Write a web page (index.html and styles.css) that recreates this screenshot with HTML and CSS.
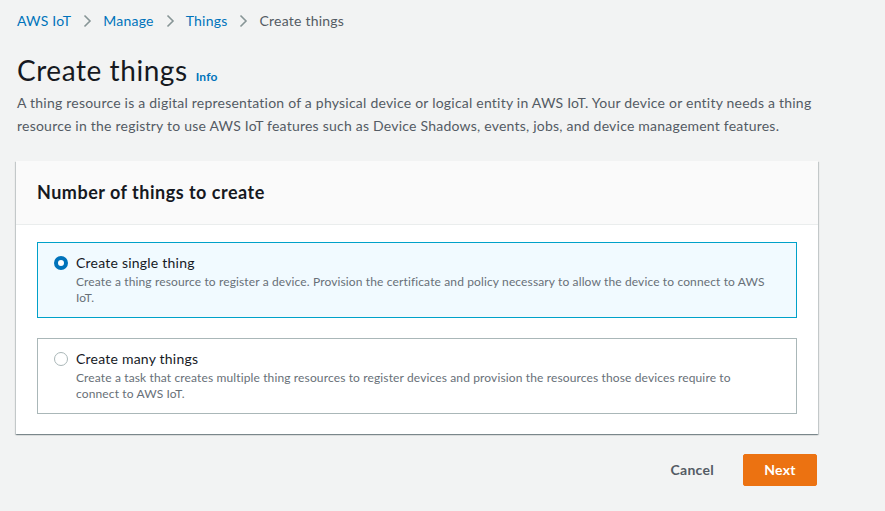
FILE: index.html
```html
<!DOCTYPE html>
<html lang="en">
<head>
<meta charset="utf-8">
<title>Create things</title>
<link rel="stylesheet" href="styles.css">
</head>
<body>
<div class="page">
  <nav class="crumbs">
    <a href="#">AWS IoT</a>
    <svg class="chev" width="16" height="16" viewBox="0 0 16 16"><path d="M5.5 2.5 11 8l-5.5 5.5" fill="none" stroke="currentColor" stroke-width="1.6"/></svg>
    <a href="#">Manage</a>
    <svg class="chev" width="16" height="16" viewBox="0 0 16 16"><path d="M5.5 2.5 11 8l-5.5 5.5" fill="none" stroke="currentColor" stroke-width="1.6"/></svg>
    <a href="#">Things</a>
    <svg class="chev" width="16" height="16" viewBox="0 0 16 16"><path d="M5.5 2.5 11 8l-5.5 5.5" fill="none" stroke="currentColor" stroke-width="1.6"/></svg>
    <span class="current">Create things</span>
  </nav>
  <header class="head">
    <h1>Create things</h1>
    <a class="info" href="#">Info</a>
  </header>
  <p class="desc">A thing resource is a digital representation of a physical device or logical entity in AWS IoT. Your device or entity needs a thing resource in the registry to use AWS IoT features such as Device Shadows, events, jobs, and device management features.</p>

  <section class="card">
    <div class="card-head"><h2>Number of things to create</h2></div>
    <div class="card-body">
      <label class="opt selected">
        <span class="radio on"></span>
        <span class="opt-text">
          <span class="opt-title">Create single thing</span>
          <span class="opt-desc">Create a thing resource to register a device. Provision the certificate and policy necessary to allow the device to connect to AWS IoT.</span>
        </span>
      </label>
      <label class="opt">
        <span class="radio"></span>
        <span class="opt-text">
          <span class="opt-title">Create many things</span>
          <span class="opt-desc">Create a task that creates multiple thing resources to register devices and provision the resources those devices require to connect to AWS IoT.</span>
        </span>
      </label>
    </div>
  </section>

  <div class="actions">
    <button class="btn-link">Cancel</button>
    <button class="btn-primary">Next</button>
  </div>
</div>
</body>
</html>
```

FILE: styles.css
```css
* { box-sizing: border-box; }
html, body { margin: 0; padding: 0; }
body {
  background: #f2f3f3;
  font-family: Lato, "Open Sans", sans-serif;
  color: #16191f;
  font-size: 14px;
  line-height: 22px;
  letter-spacing: 0.016em;
}
.page {
  width: 802px;
  margin-left: 16px;
  padding-top: 10px;
}
.crumbs {
  display: flex;
  align-items: center;
  padding-left: 1px;
  height: 22px;
  font-size: 14px;
}
.crumbs a { color: #0073bb; text-decoration: none; }
.crumbs .chev { color: #879596; margin: 0 8px 0 8px; }
.crumbs .current { color: #545b64; }
.head {
  display: flex;
  align-items: baseline;
  margin-top: 20px;
  padding-left: 1px;
}
.head h1 {
  margin: 0;
  font-size: 28px;
  line-height: 36px;
  font-weight: 400;
  letter-spacing: 0.02em;
  color: #16191f;
}
.info {
  margin-left: 8px;
  font-size: 12px;
  font-weight: 700;
  color: #0073bb;
  text-decoration: none;
}
.desc {
  margin: 3px 0 0 1px;
  color: #545b64;
  font-size: 14px;
  line-height: 23px;
  width: 815px;
}
.card {
  margin-top: 24px;
  background: #fff;
  box-shadow: 0 1px 1px 0 rgba(0,28,36,.3), 1px 1px 1px 0 rgba(0,28,36,.15), -1px 1px 1px 0 rgba(0,28,36,.15);
}
.card-head {
  background: #fafafa;
  border-bottom: 1px solid #eaeded;
  padding: 19px 21px 20px;
}
.card-head h2 {
  margin: 0;
  font-size: 18px;
  line-height: 24px;
  font-weight: 700;
  letter-spacing: 0.5px;
  color: #16191f;
}
.card-body {
  padding: 17px 21px 20px;
  display: flex;
  flex-direction: column;
  gap: 20px;
}
.opt {
  display: flex;
  align-items: flex-start;
  border: 1px solid #aab7b8;
  padding: 9px 24px 11px 16px;
  min-height: 76px;
}
.opt.selected {
  border-color: #00a1c9;
  background: #f1faff;
}
.radio {
  flex: none;
  width: 14px;
  height: 14px;
  border-radius: 50%;
  border: 1px solid #aab7b8;
  background: #fff;
  margin-top: 4px;
  margin-right: 8px;
}
.radio.on {
  border: 4px solid #0073bb;
}
.opt-text { display: flex; flex-direction: column; }
.opt-title { font-size: 14px; line-height: 22px; color: #16191f; }
.opt-desc { font-size: 12px; line-height: 16px; color: #687078; letter-spacing: 0.011em; }
.actions {
  display: flex;
  justify-content: flex-end;
  align-items: center;
  margin-top: 20px;
  padding-right: 1px;
}
.btn-link, .btn-primary {
  font-family: inherit;
  font-size: 14px;
  font-weight: 700;
  line-height: 22px;
  letter-spacing: 0.02em;
  border: 1px solid transparent;
  border-radius: 2px;
  cursor: pointer;
}
.btn-link {
  background: transparent;
  color: #545b64;
  padding: 4px 20px;
  margin-right: 8px;
}
.btn-primary {
  background: #ec7211;
  color: #fff;
  border-color: #ec7211;
  padding: 4px 0;
  width: 74px;
  height: 32px;
}
```
